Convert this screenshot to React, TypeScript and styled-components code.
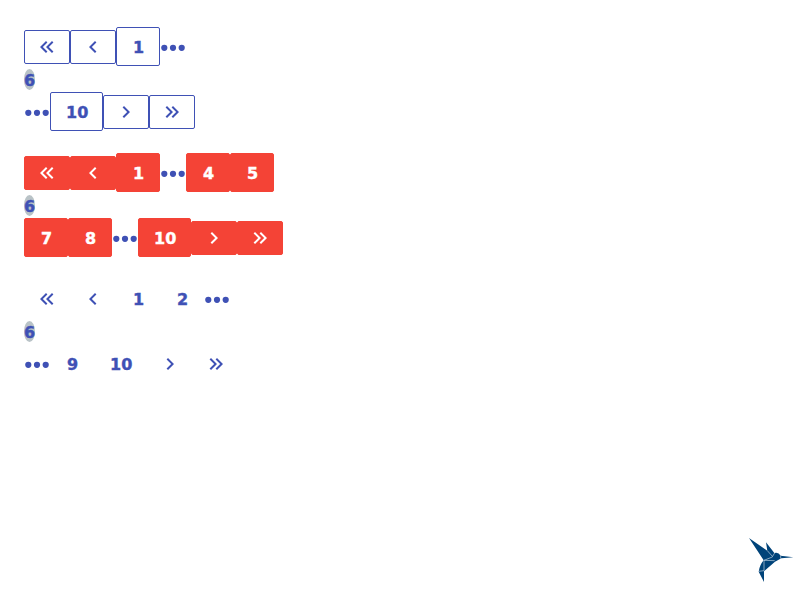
import React from "react";
import styled, { createGlobalStyle, css } from "styled-components";

type Look = "outlined" | "solid" | "plain";

const GlobalStyle = createGlobalStyle`
  *, *::before, *::after { box-sizing: border-box; }
  body {
    margin: 0;
    background: #fff;
    color: #3f51b5;
    font: bold 16px/19px Verdana, "DejaVu Sans", sans-serif;
    -webkit-text-stroke: 0.4px currentColor;
  }
`;

const Page = styled.main`
  display: flex;
  flex-direction: column;
  gap: 22px;
  padding: 27px 24px;
`;

const Pager = styled.nav`
  display: flex;
  flex-direction: column;
  align-items: flex-start;
`;

const Row = styled.div`
  display: flex;
  align-items: center;
  height: 39px;
`;

const CurrentRow = styled.div`
  display: flex;
  align-items: center;
  height: 26px;
`;

const looks = {
  outlined: css`
    border-color: #3f51b5;
    background: #fff;
    color: #3f51b5;
  `,
  solid: css`
    border-color: #f44336;
    background: #f44336;
    color: #fff;
  `,
  plain: css`
    border-color: transparent;
    background: transparent;
    color: #3f51b5;
  `,
};

const PageButton = styled.button<{ $look: Look }>`
  min-width: 44px;
  height: 39px;
  padding: 2px 14px 0 15px;
  border: 1px solid;
  border-radius: 2px;
  font: inherit;
  text-align: center;
  cursor: pointer;
  ${({ $look }) => looks[$look]}
`;

const ArrowButton = styled(PageButton)`
  display: flex;
  height: 34px;
  padding: 4px 10px;
`;

const Current = styled.span`
  padding-top: 2px;
  border-radius: 50%;
  background: #b9c3c7;
`;

const Icon = styled.svg`
  display: block;
  width: 24px;
  height: 24px;
  fill: currentColor;
`;

const DotsIcon = styled.svg`
  display: block;
  width: 26px;
  height: 24px;
  fill: currentColor;
`;

const Logo = styled.svg`
  position: fixed;
  right: 0;
  bottom: 10px;
  width: 60px;
  height: 60px;
`;

const arrows = {
  first: {
    label: "First page",
    d: "M18.41 7.41 17 6l-6 6 6 6 1.41-1.41L13.83 12zM12.41 7.41 11 6l-6 6 6 6 1.41-1.41L7.83 12z",
  },
  prev: {
    label: "Previous page",
    d: "M15.41 7.41 14 6l-6 6 6 6 1.41-1.41L10.83 12z",
  },
  next: {
    label: "Next page",
    d: "M8.59 16.59 13.17 12 8.59 7.41 10 6l6 6-6 6z",
  },
  last: {
    label: "Last page",
    d: "M5.59 7.41 7 6l6 6-6 6-1.41-1.41L10.17 12zM11.59 7.41 13 6l6 6-6 6-1.41-1.41L16.17 12z",
  },
};

function Arrow({ kind, look }: { kind: keyof typeof arrows; look: Look }) {
  return (
    <ArrowButton $look={look} type="button" aria-label={arrows[kind].label}>
      <Icon viewBox="0 0 24 24">
        <path d={arrows[kind].d} />
      </Icon>
    </ArrowButton>
  );
}

function Dots() {
  return (
    <DotsIcon viewBox="0 0 26 24" aria-hidden="true">
      <circle cx="4.3" cy="12.8" r="3.1" />
      <circle cx="13" cy="12.8" r="3.1" />
      <circle cx="21.7" cy="12.8" r="3.1" />
    </DotsIcon>
  );
}

type Item = number | "dots";

function Items({ items, look }: { items: Item[]; look: Look }) {
  return (
    <>
      {items.map((item) =>
        item === "dots" ? (
          <Dots key={item} />
        ) : (
          <PageButton key={item} $look={look} type="button">
            {item}
          </PageButton>
        )
      )}
    </>
  );
}

interface PaginationProps {
  look: Look;
  before: Item[];
  current: number;
  after: Item[];
}

function Pagination({ look, before, current, after }: PaginationProps) {
  return (
    <Pager aria-label={`Pagination, ${look}`}>
      <Row>
        <Arrow kind="first" look={look} />
        <Arrow kind="prev" look={look} />
        <Items items={before} look={look} />
      </Row>
      <CurrentRow>
        <Current aria-current="page">{current}</Current>
      </CurrentRow>
      <Row>
        <Items items={after} look={look} />
        <Arrow kind="next" look={look} />
        <Arrow kind="last" look={look} />
      </Row>
    </Pager>
  );
}

export default function App() {
  return (
    <>
      <GlobalStyle />
      <Page>
        <Pagination look="outlined" before={[1, "dots"]} current={6} after={["dots", 10]} />
        <Pagination look="solid" before={[1, "dots", 4, 5]} current={6} after={[7, 8, "dots", 10]} />
        <Pagination look="plain" before={[1, 2, "dots"]} current={6} after={["dots", 9, 10]} />
      </Page>
      <Logo viewBox="0 0 180 180" role="img" aria-label="Hummingbird">
        <path
          fill="#004379"
          d="M27 24 82 62 78 37 103 69Q115 65 122 77L160 82 124 85 105 95 72 124V156L56 125Q59 105 71 91z"
        />
        <path
          fill="none"
          stroke="#c5d6e4"
          strokeWidth="2"
          d="M82 62 98 80M72 91 104 92M97 81 72 91V122L56 124M97 80 104 69M122 76V86"
        />
      </Logo>
    </>
  );
}
